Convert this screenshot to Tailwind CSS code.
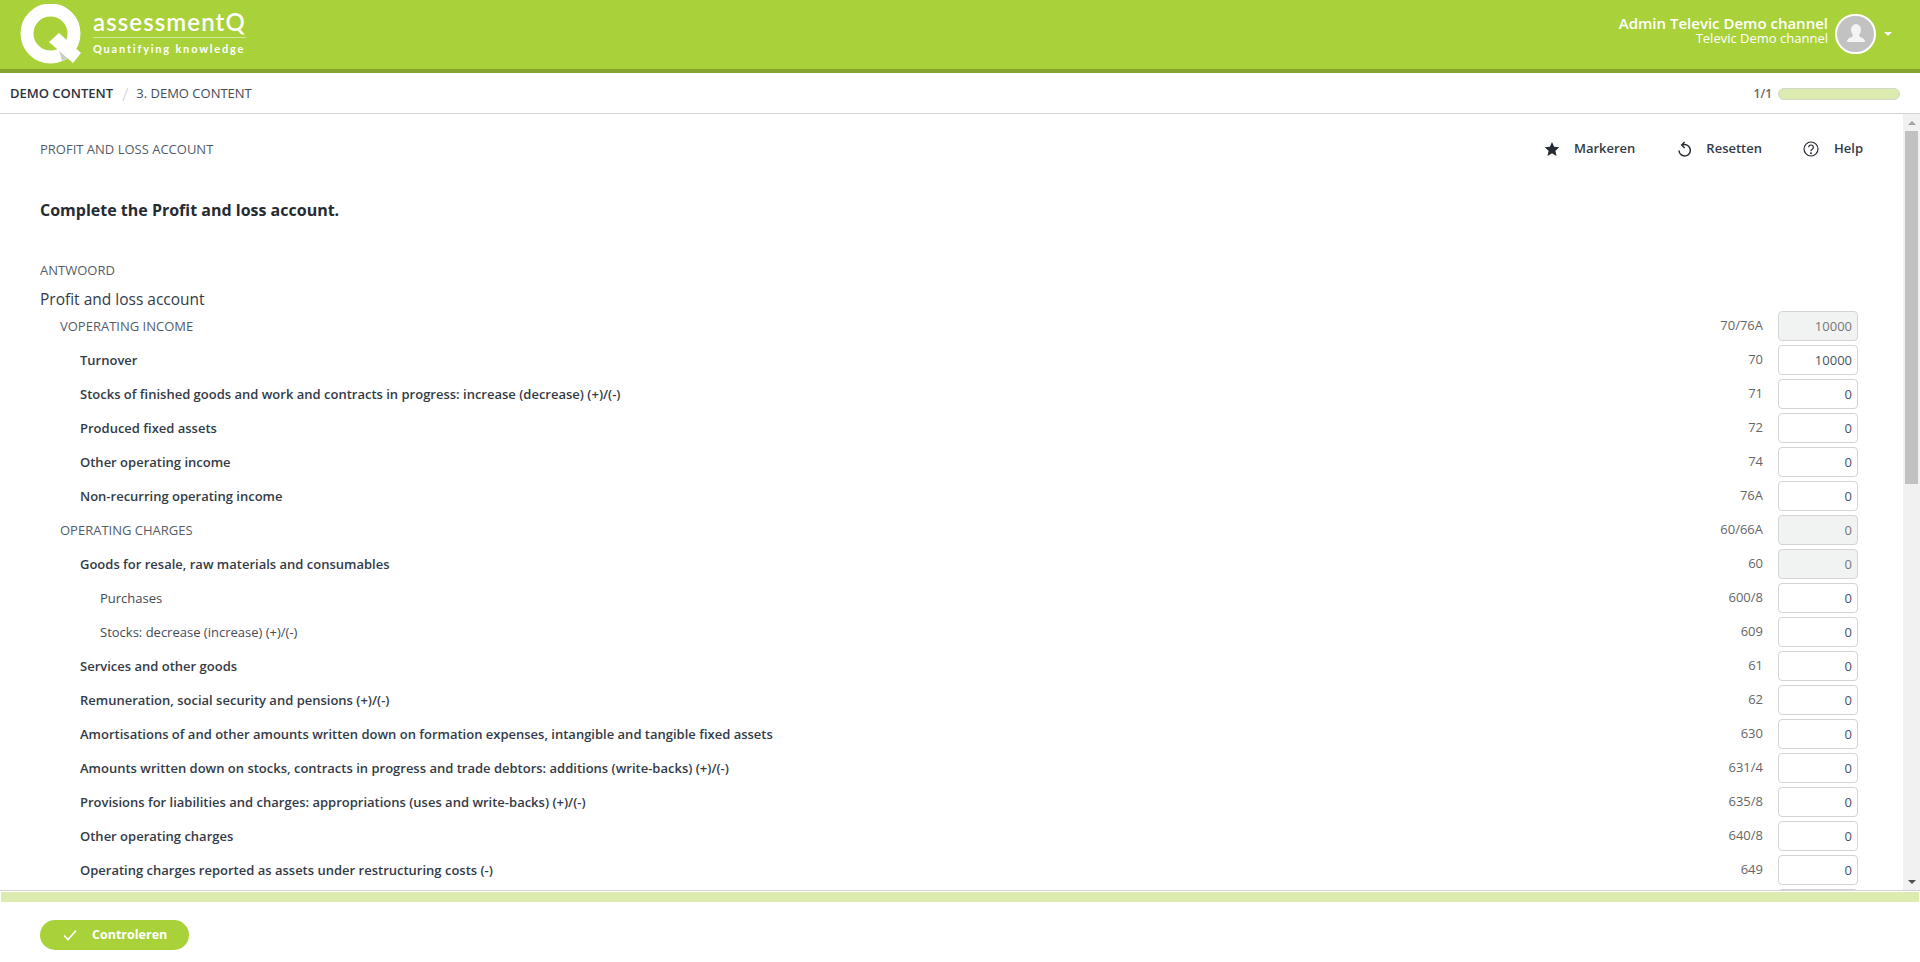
<!DOCTYPE html>
<html lang="en">
<head>
  <meta charset="UTF-8">
  <title>assessmentQ - Profit and loss account</title>
  <script src="https://cdn.jsdelivr.net/npm/@tailwindcss/browser@4"></script>
</head>
<body class="h-screen overflow-hidden flex flex-col bg-white font-['Open_Sans',sans-serif] text-[#333b47]">

  <!-- Header -->
  <header class="h-[73px] shrink-0 bg-[#a9d139] border-b-4 border-[#83a32c] flex items-start justify-between">
    <div class="flex items-start">
      <svg class="ml-[20px] mt-[4px]" width="62" height="60" viewBox="20 4 62 60">
        <circle cx="50.5" cy="33.5" r="23.5" fill="none" stroke="#fff" stroke-width="13"/>
        <polygon points="59,50 62,61 68,58" fill="#c9cfc0"/>
        <polygon points="49,42 59,33 81,53 73,63" fill="#fff"/>
      </svg>
      <div class="ml-[11px] w-[153px] text-white">
        <div class="mt-[9px] text-[24px] leading-[26px] tracking-[1.1px] font-semibold font-['Lato',sans-serif] whitespace-nowrap">assessmentQ</div>
        <div class="mt-[2px] h-px bg-white/50"></div>
        <div class="mt-[4px] text-[11px] leading-[14px] tracking-[1.8px] font-bold font-['Lato',sans-serif] whitespace-nowrap">Quantifying knowledge</div>
      </div>
    </div>
    <div class="flex items-center mt-[14px] mr-[28px]">
      <div class="text-right text-white mb-[7px]">
        <div class="text-[15px] leading-[16px] font-semibold">Admin Televic Demo channel</div>
        <div class="text-[13px] leading-[15px]">Televic Demo channel</div>
      </div>
      <div class="ml-[7px] w-[41px] h-[40px] rounded-full border-2 border-white bg-[#c2c2c2] flex items-center justify-center">
        <svg width="22" height="22" viewBox="0 0 22 22" fill="#f4f4f4">
          <ellipse cx="11" cy="7" rx="5" ry="6"/>
          <path d="M8 12 L14 12 L15 14 C18 15 20 16 20 19 L2 19 C2 16 4 15 7 14 Z"/>
        </svg>
      </div>
      <div class="ml-[8px] w-0 h-0 border-x-[4px] border-x-transparent border-t-[4px] border-t-white"></div>
    </div>
  </header>

  <!-- Breadcrumb -->
  <div class="h-[41px] shrink-0 border-b border-[#d4d4d4] flex items-center justify-between pl-[10px] pr-[20px] pt-[2px]">
    <div class="flex items-center text-[13px]">
      <span class="font-semibold text-[#2b3340]">DEMO CONTENT</span>
      <span class="ml-[9px] mr-[8px] text-[#ccc] text-[18px] font-light leading-none">/</span>
      <span class="text-[#434b58]">3. DEMO CONTENT</span>
    </div>
    <div class="flex items-center">
      <span class="text-[12px] font-semibold text-[#666]">1/1</span>
      <div class="ml-[6px] w-[122px] h-[12px] rounded-full bg-[#dcebb0] border border-[#d4d8c4]"></div>
    </div>
  </div>

  <!-- Scrollable question + scrollbar -->
  <div class="flex-1 min-h-0 flex">
    <main class="flex-1 min-w-0 overflow-hidden pl-[40px] pr-[45px]">
      <div class="h-[71px] flex items-center justify-between">
        <div class="text-[13px] text-[#555c68]">PROFIT AND LOSS ACCOUNT</div>
        <div class="flex items-center text-[13px] font-semibold text-[#333b47] mr-[-5px] mt-[-2px]">
          <svg width="16" height="16" viewBox="0 0 24 24" fill="#262b33"><path d="M12 1.5l3.2 7.2 7.8.8-5.9 5.2 1.7 7.7L12 18.4l-6.8 4 1.7-7.7L1 9.5l7.8-.8z"/></svg>
          <span class="ml-[14px]">Markeren</span>
          <svg class="ml-[41px]" width="16" height="16" viewBox="0 0 24 24" fill="none" stroke="#262b33" stroke-width="2.2"><path d="M9.5 6.2a8.5 8.5 0 1 1-5 8"/><path d="M13 1.5 L8.5 6 L13 10.5" /></svg>
          <span class="ml-[14px]">Resetten</span>
          <svg class="ml-[41px]" width="16" height="16" viewBox="0 0 24 24" fill="none" stroke="#262b33" stroke-width="1.8"><circle cx="12" cy="12" r="10.5"/><path d="M8.5 9.5a3.5 3.5 0 1 1 5.4 3c-1.3.8-1.9 1.4-1.9 2.7"/><circle cx="12" cy="18.3" r=".6" fill="#262b33"/></svg>
          <span class="ml-[15px]">Help</span>
        </div>
      </div>

      <h1 class="mt-[15px] text-[16px] leading-[20px] font-bold text-[#262b33]">Complete the Profit and loss account.</h1>
      <div class="mt-[40px] text-[13px] leading-[20px] text-[#555c68]">ANTWOORD</div>
      <div class="mt-[9px] text-[15.5px] leading-[20px] font-medium text-[#333b47]">Profit and loss account</div>

      <div class="mt-[2px] flex flex-col gap-[4px]">
        <div class="h-[30px] flex items-center pl-[20px]"><span class="flex-1 pt-[1px] text-[13px] text-[#555c68]">VOPERATING INCOME</span><span class="text-[13px] text-[#666]">70/76A</span><input readonly value="10000" class="ml-[15px] w-[80px] h-[30px] rounded-[4px] border border-[#d4d4d4] bg-[#f1f3f3] px-[5px] text-right text-[13px] text-[#777]"></div>
        <div class="h-[30px] flex items-center pl-[40px]"><span class="flex-1 pt-[1px] text-[13px] font-semibold text-[#333b47]">Turnover</span><span class="text-[13px] text-[#666]">70</span><input value="10000" class="ml-[15px] w-[80px] h-[30px] rounded-[4px] border border-[#d4d4d4] bg-white px-[5px] text-right text-[13px] text-[#4a5260]"></div>
        <div class="h-[30px] flex items-center pl-[40px]"><span class="flex-1 pt-[1px] text-[13px] font-semibold text-[#333b47]">Stocks of finished goods and work and contracts in progress: increase (decrease) (+)/(-)</span><span class="text-[13px] text-[#666]">71</span><input value="0" class="ml-[15px] w-[80px] h-[30px] rounded-[4px] border border-[#d4d4d4] bg-white px-[5px] text-right text-[13px] text-[#4a5260]"></div>
        <div class="h-[30px] flex items-center pl-[40px]"><span class="flex-1 pt-[1px] text-[13px] font-semibold text-[#333b47]">Produced fixed assets</span><span class="text-[13px] text-[#666]">72</span><input value="0" class="ml-[15px] w-[80px] h-[30px] rounded-[4px] border border-[#d4d4d4] bg-white px-[5px] text-right text-[13px] text-[#4a5260]"></div>
        <div class="h-[30px] flex items-center pl-[40px]"><span class="flex-1 pt-[1px] text-[13px] font-semibold text-[#333b47]">Other operating income</span><span class="text-[13px] text-[#666]">74</span><input value="0" class="ml-[15px] w-[80px] h-[30px] rounded-[4px] border border-[#d4d4d4] bg-white px-[5px] text-right text-[13px] text-[#4a5260]"></div>
        <div class="h-[30px] flex items-center pl-[40px]"><span class="flex-1 pt-[1px] text-[13px] font-semibold text-[#333b47]">Non-recurring operating income</span><span class="text-[13px] text-[#666]">76A</span><input value="0" class="ml-[15px] w-[80px] h-[30px] rounded-[4px] border border-[#d4d4d4] bg-white px-[5px] text-right text-[13px] text-[#4a5260]"></div>
        <div class="h-[30px] flex items-center pl-[20px]"><span class="flex-1 pt-[1px] text-[13px] text-[#555c68]">OPERATING CHARGES</span><span class="text-[13px] text-[#666]">60/66A</span><input readonly value="0" class="ml-[15px] w-[80px] h-[30px] rounded-[4px] border border-[#d4d4d4] bg-[#f1f3f3] px-[5px] text-right text-[13px] text-[#777]"></div>
        <div class="h-[30px] flex items-center pl-[40px]"><span class="flex-1 pt-[1px] text-[13px] font-semibold text-[#333b47]">Goods for resale, raw materials and consumables</span><span class="text-[13px] text-[#666]">60</span><input readonly value="0" class="ml-[15px] w-[80px] h-[30px] rounded-[4px] border border-[#d4d4d4] bg-[#f1f3f3] px-[5px] text-right text-[13px] text-[#777]"></div>
        <div class="h-[30px] flex items-center pl-[60px]"><span class="flex-1 pt-[1px] text-[13px] text-[#444b57]">Purchases</span><span class="text-[13px] text-[#666]">600/8</span><input value="0" class="ml-[15px] w-[80px] h-[30px] rounded-[4px] border border-[#d4d4d4] bg-white px-[5px] text-right text-[13px] text-[#4a5260]"></div>
        <div class="h-[30px] flex items-center pl-[60px]"><span class="flex-1 pt-[1px] text-[13px] text-[#444b57]">Stocks: decrease (increase) (+)/(-)</span><span class="text-[13px] text-[#666]">609</span><input value="0" class="ml-[15px] w-[80px] h-[30px] rounded-[4px] border border-[#d4d4d4] bg-white px-[5px] text-right text-[13px] text-[#4a5260]"></div>
        <div class="h-[30px] flex items-center pl-[40px]"><span class="flex-1 pt-[1px] text-[13px] font-semibold text-[#333b47]">Services and other goods</span><span class="text-[13px] text-[#666]">61</span><input value="0" class="ml-[15px] w-[80px] h-[30px] rounded-[4px] border border-[#d4d4d4] bg-white px-[5px] text-right text-[13px] text-[#4a5260]"></div>
        <div class="h-[30px] flex items-center pl-[40px]"><span class="flex-1 pt-[1px] text-[13px] font-semibold text-[#333b47]">Remuneration, social security and pensions (+)/(-)</span><span class="text-[13px] text-[#666]">62</span><input value="0" class="ml-[15px] w-[80px] h-[30px] rounded-[4px] border border-[#d4d4d4] bg-white px-[5px] text-right text-[13px] text-[#4a5260]"></div>
        <div class="h-[30px] flex items-center pl-[40px]"><span class="flex-1 pt-[1px] text-[13px] font-semibold text-[#333b47]">Amortisations of and other amounts written down on formation expenses, intangible and tangible fixed assets</span><span class="text-[13px] text-[#666]">630</span><input value="0" class="ml-[15px] w-[80px] h-[30px] rounded-[4px] border border-[#d4d4d4] bg-white px-[5px] text-right text-[13px] text-[#4a5260]"></div>
        <div class="h-[30px] flex items-center pl-[40px]"><span class="flex-1 pt-[1px] text-[13px] font-semibold text-[#333b47]">Amounts written down on stocks, contracts in progress and trade debtors: additions (write-backs) (+)/(-)</span><span class="text-[13px] text-[#666]">631/4</span><input value="0" class="ml-[15px] w-[80px] h-[30px] rounded-[4px] border border-[#d4d4d4] bg-white px-[5px] text-right text-[13px] text-[#4a5260]"></div>
        <div class="h-[30px] flex items-center pl-[40px]"><span class="flex-1 pt-[1px] text-[13px] font-semibold text-[#333b47]">Provisions for liabilities and charges: appropriations (uses and write-backs) (+)/(-)</span><span class="text-[13px] text-[#666]">635/8</span><input value="0" class="ml-[15px] w-[80px] h-[30px] rounded-[4px] border border-[#d4d4d4] bg-white px-[5px] text-right text-[13px] text-[#4a5260]"></div>
        <div class="h-[30px] flex items-center pl-[40px]"><span class="flex-1 pt-[1px] text-[13px] font-semibold text-[#333b47]">Other operating charges</span><span class="text-[13px] text-[#666]">640/8</span><input value="0" class="ml-[15px] w-[80px] h-[30px] rounded-[4px] border border-[#d4d4d4] bg-white px-[5px] text-right text-[13px] text-[#4a5260]"></div>
        <div class="h-[30px] flex items-center pl-[40px]"><span class="flex-1 pt-[1px] text-[13px] font-semibold text-[#333b47]">Operating charges reported as assets under restructuring costs (-)</span><span class="text-[13px] text-[#666]">649</span><input value="0" class="ml-[15px] w-[80px] h-[30px] rounded-[4px] border border-[#d4d4d4] bg-white px-[5px] text-right text-[13px] text-[#4a5260]"></div>
        <div class="h-[30px] flex items-center pl-[40px]"><span class="flex-1"></span><input readonly class="w-[80px] h-[30px] rounded-[4px] border border-[#d4d4d4] bg-[#f1f3f3]"></div>
      </div>
    </main>

    <!-- Scrollbar -->
    <div class="w-[17px] shrink-0 bg-[#f1f1f1] flex flex-col items-center">
      <div class="h-[17px] shrink-0 flex items-center justify-center"><div class="w-0 h-0 border-x-[4px] border-x-transparent border-b-[4px] border-b-[#a3a3a3]"></div></div>
      <div class="w-[13px] h-[353px] bg-[#c1c1c1]"></div>
      <div class="flex-1"></div>
      <div class="h-[17px] shrink-0 flex items-center justify-center"><div class="w-0 h-0 border-x-[4px] border-x-transparent border-t-[4px] border-t-[#505050]"></div></div>
    </div>
  </div>

  <!-- Footer -->
  <footer class="h-[72px] shrink-0 border-t border-[#d4d4d4]">
    <div class="h-[10px] mx-[1px] mt-[1px] bg-[#dcebb0]"></div>
    <div class="pl-[40px] pt-[18px]">
      <button class="w-[149px] h-[30px] rounded-full bg-[#a9d139] text-white text-[12.5px] font-bold flex items-center">
        <svg class="ml-[23px]" width="14" height="12" viewBox="0 0 14 12" fill="none" stroke="#fff" stroke-width="1.6"><path d="M1 6.5 L5 10.5 L13 1.5"/></svg>
        <span class="ml-[15px]">Controleren</span>
      </button>
    </div>
  </footer>

</body>
</html>
